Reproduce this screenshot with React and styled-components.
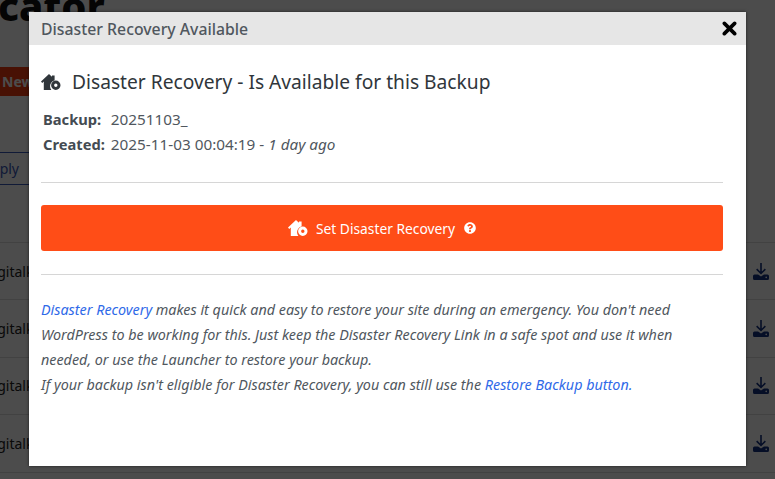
import React from 'react';
import styled, { createGlobalStyle } from 'styled-components';
import { FaQuestionCircle } from 'react-icons/fa';

const GlobalStyle = createGlobalStyle`
  html, body {
    margin: 0;
    height: 100%;
    overflow: hidden;
    background: #fff;
    font-family: "Noto Sans", "Open Sans", sans-serif;
  }
`;

const Page = styled.div`
  position: relative;
  width: 775px;
  height: 479px;
  overflow: hidden;
  display: flex;
  flex-direction: column;
  background: #fff;
`;

const Logo = styled.div`
  height: 60px;
  margin-left: -108px;
  margin-top: -24px;
  font-size: 40px;
  font-weight: 800;
  line-height: 60px;
  color: #111;
  white-space: nowrap;
`;

const NewRow = styled.div`
  display: flex;
  margin-top: 31px;
`;

const NewButton = styled.div`
  height: 29px;
  padding: 0 10px 0 2px;
  background: #f03a10;
  color: #fff;
  font-size: 14px;
  font-weight: 700;
  line-height: 29px;
`;

const ApplyRow = styled.div`
  display: flex;
  margin-top: 56px;
  padding-bottom: 57px;
  border-bottom: 1px solid #ddd;
`;

const ApplyButton = styled.div`
  width: 70px;
  height: 33px;
  margin-left: -30px;
  box-sizing: border-box;
  border: 1px solid #3858b8;
  border-radius: 3px;
  color: #3858b8;
  font-size: 14px;
  line-height: 31px;
  text-align: right;
  padding-right: 20px;
`;

const Row = styled.div`
  height: 57.4px;
  flex: none;
  display: flex;
  align-items: center;
  justify-content: space-between;
  box-sizing: border-box;
  padding-right: 6px;
  border-bottom: 1px solid #ddd;
  font-size: 14px;
  color: #222;
`;

const RowName = styled.span`
  margin-left: -15px;
`;

const RowIcon = styled.svg`
  width: 16px;
  height: 17px;
  color: #13307f;
`;

const Overlay = styled.div`
  position: absolute;
  inset: 0;
  background: rgba(0, 0, 0, 0.7);
`;

const Modal = styled.div`
  position: absolute;
  left: 29px;
  top: 12px;
  width: 717px;
  height: 454px;
  display: flex;
  flex-direction: column;
  background: #fff;
  box-shadow: 0 0 3px rgba(0, 0, 0, 0.6);
`;

const ModalHeader = styled.div`
  height: 33px;
  flex: none;
  display: flex;
  align-items: center;
  justify-content: space-between;
  padding: 0 9px 0 12px;
  background: #e6e6e6;
  color: #50575e;
  font-size: 15.8px;
  font-weight: 500;
`;

const CloseButton = styled.svg`
  width: 15px;
  height: 15px;
  color: #000;
`;

const ModalBody = styled.div`
  padding: 0 23px 0 12px;
  color: #444b52;
`;

const Heading = styled.h2`
  display: flex;
  align-items: center;
  gap: 11px;
  margin: 24px 0 0;
  font-size: 19.2px;
  font-weight: 400;
  line-height: 26px;
  color: #30363b;
`;

const HouseIcon = styled.svg`
  width: ${(p) => p.$size}px;
  height: ${(p) => p.$size * 0.8}px;
  flex: none;
`;

const Meta = styled.div`
  display: grid;
  grid-template-columns: max-content 1fr;
  column-gap: 6px;
  margin: 12px 0 0 2px;
  font-size: 14.7px;
  line-height: 25px;
`;

const MetaLabel = styled.span`
  font-weight: 700;
`;

const MetaValue = styled.span`
  color: #50575e;
  font-size: 15.3px;
  em { font-style: italic; }
`;

const Divider = styled.hr`
  height: 1px;
  margin: 0;
  border: 0;
  background: #d6d6d6;
`;

const MetaDivider = styled(Divider)`
  margin-top: 25px;
`;

const SetButton = styled.button`
  display: flex;
  align-items: center;
  justify-content: center;
  gap: 8px;
  width: 100%;
  height: 46px;
  margin: 22px 0 23px;
  border: 0;
  border-radius: 3px;
  background: #ff4d17;
  color: #fff;
  font-family: inherit;
  font-size: 13.8px;
`;

const HelpIcon = styled(FaQuestionCircle)`
  width: 12px;
  height: 12px;
  margin-left: 1px;
`;

const Description = styled.p`
  margin: 22px 0 0;
  font-size: 14.35px;
  font-style: italic;
  line-height: 25px;
  color: #50575e;
`;

const Link = styled.a`
  color: #2f6ae8;
`;

const House = ({ size }) => (
  <HouseIcon $size={size} viewBox="0 0 20 16" fill="currentColor">
    <path d="M8 0 0 7.4 1.2 9 2.8 7.6V16h7.6a6 6 0 0 1 2.9-9.5L13.6 6V1.4h-2.6v1.4L9 .9z" />
    <path fillRule="evenodd" d="M14.8 6.6a4.7 4.7 0 1 1 0 9.4 4.7 4.7 0 0 1 0-9.4zm0 3a1.7 1.7 0 1 0 0 3.4 1.7 1.7 0 0 0 0-3.4z" />
  </HouseIcon>
);

const rows = [1, 2, 3, 4];

export default function App() {
  return (
    <Page>
      <GlobalStyle />
      <Logo>Duplicator</Logo>
      <NewRow>
        <NewButton>New</NewButton>
      </NewRow>
      <ApplyRow>
        <ApplyButton>Apply</ApplyButton>
      </ApplyRow>
      {rows.map((r) => (
        <Row key={r}>
          <RowName>digitalk</RowName>
          <RowIcon viewBox="0 0 16 17" fill="currentColor">
            <path d="M7.2 0h1.6v8.6l3-3 1.1 1.1L8 11.6 3.1 6.7l1.1-1.1 3 3z" />
            <path fillRule="evenodd" d="M1.5 11.5h3.6L8 13.6l2.9-2.1h3.6a1.5 1.5 0 0 1 1.5 1.5v2.5a1.5 1.5 0 0 1-1.5 1.5h-13A1.5 1.5 0 0 1 0 15.5V13a1.5 1.5 0 0 1 1.5-1.5zm11.7 2.1a.8.8 0 1 0 0 1.6.8.8 0 0 0 0-1.6z" />
          </RowIcon>
        </Row>
      ))}
      <Overlay />
      <Modal>
        <ModalHeader>
          Disaster Recovery Available
          <CloseButton viewBox="0 0 14 14" fill="none" stroke="currentColor" strokeWidth="3.4" strokeLinecap="round">
            <path d="M2.2 2.2l9.6 9.6M11.8 2.2l-9.6 9.6" />
          </CloseButton>
        </ModalHeader>
        <ModalBody>
          <Heading>
            <House size={20} />
            Disaster Recovery - Is Available for this Backup
          </Heading>
          <Meta>
            <MetaLabel>Backup:</MetaLabel>
            <MetaValue>20251103_</MetaValue>
            <MetaLabel>Created:</MetaLabel>
            <MetaValue>
              2025-11-03 00:04:19 - <em>1 day ago</em>
            </MetaValue>
          </Meta>
          <MetaDivider />
          <SetButton>
            <House size={20} />
            Set Disaster Recovery
            <HelpIcon />
          </SetButton>
          <Divider />
          <Description>
            <Link>Disaster Recovery</Link> makes it quick and easy to restore your site during an emergency. You don't need
            <br />
            WordPress to be working for this. Just keep the Disaster Recovery Link in a safe spot and use it when
            <br />
            needed, or use the Launcher to restore your backup.
            <br />
            If your backup isn't eligible for Disaster Recovery, you can still use the <Link>Restore Backup button.</Link>
          </Description>
        </ModalBody>
      </Modal>
    </Page>
  );
}
